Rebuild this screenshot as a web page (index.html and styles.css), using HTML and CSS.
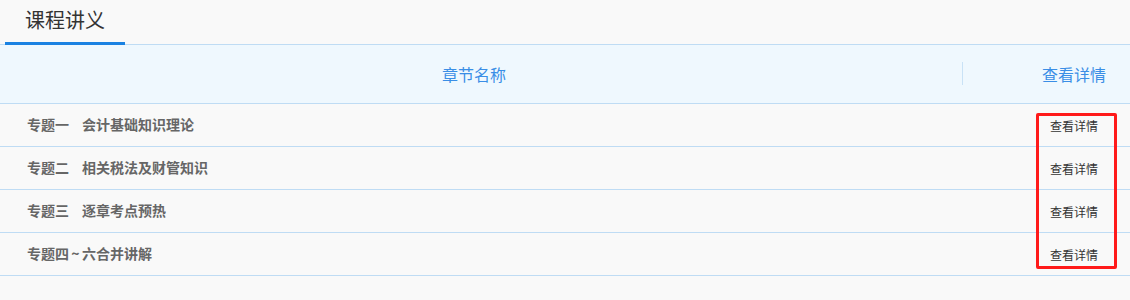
FILE: index.html
```html
<!DOCTYPE html>
<html lang="zh">
<head>
<meta charset="utf-8">
<link rel="stylesheet" href="styles.css">
</head>
<body>
<div class="page">
  <div class="tabs">
    <div class="tab active">课程讲义</div>
  </div>
  <div class="table">
    <div class="thead">
      <div class="th name">章节名称</div>
      <div class="th act"><span class="divider"></span><span class="act-label">查看详情</span></div>
    </div>
    <div class="tr">
      <div class="td name"><span class="no">专题一</span>会计基础知识理论</div>
      <div class="td act"><a class="link">查看详情</a></div>
    </div>
    <div class="tr">
      <div class="td name"><span class="no">专题二</span>相关税法及财管知识</div>
      <div class="td act"><a class="link">查看详情</a></div>
    </div>
    <div class="tr">
      <div class="td name"><span class="no">专题三</span>逐章考点预热</div>
      <div class="td act"><a class="link">查看详情</a></div>
    </div>
    <div class="tr">
      <div class="td name">专题四<span class="tilde">~</span>六合并讲解</div>
      <div class="td act"><a class="link">查看详情</a></div>
    </div>
    <div class="highlight"></div>
  </div>
</div>
</body>
</html>
```
FILE: styles.css
```css
html, body {
  margin: 0;
  padding: 0;
  background: #f9f9f9;
}
body {
  font-family: "Microsoft YaHei", "Noto Sans CJK SC", "Noto Sans", sans-serif;
  width: 1130px;
  height: 300px;
  overflow: hidden;
}
.page {
  width: 1130px;
}
.tabs {
  height: 44px;
  border-bottom: 1px solid #bfdcf4;
  display: flex;
  padding-left: 5px;
}
.tab {
  width: 120px;
  height: 45px;
  box-sizing: border-box;
  text-align: center;
  font-size: 20px;
  line-height: 40px;
  color: #333;
  border-bottom: 3px solid #1a82e2;
}
.table {
  position: relative;
}
.thead {
  display: flex;
  height: 58px;
  box-sizing: border-box;
  padding-bottom: 1px;
  background: #eff8fe;
  border-bottom: 1px solid #bfdcf4;
  align-items: center;
  height: 59px;
}
.th {
  font-size: 16px;
  color: #3a8ee6;
}
.th.name {
  width: 948px;
  text-align: center;
}
.th.act {
  flex: 1;
  display: flex;
  align-items: center;
  padding-left: 14px;
  padding-right: 24px;
}
.divider {
  width: 1px;
  height: 23px;
  background: #c9e2f6;
}
.act-label {
  margin-left: auto;
}
.tr {
  display: flex;
  height: 43px;
  box-sizing: border-box;
  padding-bottom: 2px;
  align-items: center;
  border-bottom: 1px solid #bfdcf4;
}
.td.name {
  flex: 1;
  padding-left: 27px;
  font-size: 14px;
  font-weight: bold;
  color: #666;
}
.no {
  margin-right: 13px;
}
.tilde {
  display: inline-block;
  width: 13px;
  text-align: center;
}
.td.act {
  width: 80px;
  padding-right: 32px;
  text-align: right;
}
.link {
  font-size: 12px;
  color: #333;
  text-decoration: none;
}
.highlight {
  position: absolute;
  left: 1036px;
  top: 68px;
  width: 81px;
  height: 156px;
  box-sizing: border-box;
  border: 3px solid #ff1a1a;
  border-radius: 2px;
}
```
